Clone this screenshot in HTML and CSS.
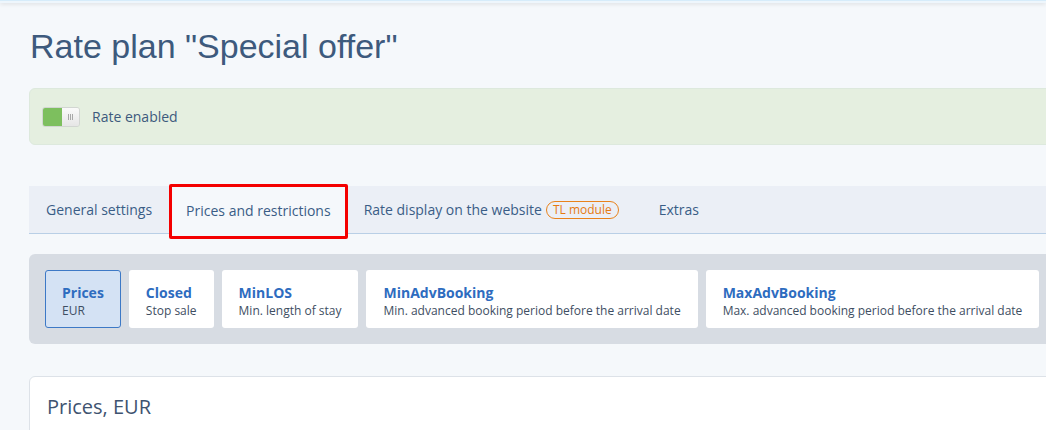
FILE: index.html
```html
<!doctype html>
<html lang="en">
 <head>
  <meta charset="UTF-8">
  <title>Rate plan</title>
  <link rel="stylesheet" href="styles.css">
 </head>
 <body>
  <div class="topbar"></div>

  <div class="page">
   <h1 class="title">Rate plan "Special offer"</h1>

   <!-- rate on/off -->
   <div class="status">
    <span class="toggle">
     <span class="toggle-on"></span>
     <span class="toggle-knob"><i></i><i></i><i></i></span>
    </span>
    <span class="status-text">Rate enabled</span>
   </div>

   <div class="tabs">
    <div class="tab">General settings</div>
    <div class="tab tab-active">Prices and restrictions</div>
    <div class="tab tab-wide">Rate display on the website <span class="badge">TL module</span></div>
    <div class="tab">Extras</div>
   </div>

   <div class="filters">
    <div class="card card-active">
     <div class="card-title">Prices</div>
     <div class="card-sub">EUR</div>
    </div>
    <div class="card">
     <div class="card-title">Closed</div>
     <div class="card-sub">Stop sale</div>
    </div>
    <div class="card">
     <div class="card-title">MinLOS</div>
     <div class="card-sub">Min. length of stay</div>
    </div>
    <div class="card">
     <div class="card-title">MinAdvBooking</div>
     <div class="card-sub">Min. advanced booking period before the arrival date</div>
    </div>
    <div class="card">
     <div class="card-title">MaxAdvBooking</div>
     <div class="card-sub">Max. advanced booking period before the arrival date</div>
    </div>
   </div>

   <div class="panel">
    <h2 class="panel-title">Prices, EUR</h2>
   </div>
  </div>
 </body>
</html>
```

FILE: styles.css
```css
/* reset */
*{margin:0;padding:0;box-sizing:border-box}

body{
	background:#f5f8fb;
	font-family:"Open Sans","Noto Sans",sans-serif;
	color:#3c5a7e;
	overflow:hidden;
}

.topbar{
	height:3px;
	background:#eef6fc;
	border-top:1px solid #d6ecfa;
	box-shadow:0 1px 4px rgba(0,0,0,0.12);
}

.page{
	width:1100px;
	padding-left:29px;
}

.title{
	font-family:"Liberation Sans",Arial,sans-serif;
	font-weight:normal;
	font-size:34px;
	color:#3d5a7d;
	line-height:40px;
	margin-top:23px;
	margin-left:1px;
}

/* green status box */
.status{
	margin-top:22px;
	height:57px;
	background:#e5efe0;
	border:1px solid #dde9dd;
	border-radius:6px;
	display:flex;
	align-items:center;
	padding-left:12px;
}
.toggle{
	display:flex;
	width:38px;
	height:20px;
	border-radius:3px;
	overflow:hidden;
	border:1px solid #d2d6d2;
}
.toggle-on{
	width:19px;
	background:#7dbf5e;
}
.toggle-knob{
	flex:1;
	background:linear-gradient(#fafafa,#e6e6e6);
	display:flex;
	justify-content:center;
	align-items:center;
	gap:1px;
}
.toggle-knob i{
	width:1px;
	height:6px;
	background:#a8a8a8;
}
.status-text{
	margin-left:12px;
	font-size:14px;
	color:#3d5a7d;
}

/* tabs */
.tabs{
	margin-top:41px;
	height:48px;
	background:#ebeff6;
	border-bottom:1px solid #b9cfe6;
	display:flex;
}
.tab{
	position:relative;
	display:flex;
	align-items:center;
	padding:0 17px;
	font-size:14px;
	color:#3a5d86;
	white-space:nowrap;
}
.tab-active{
	background:#f5f8fb;
	padding:0 16px;
	margin-left:1px;
	height:48px;
}
/* red highlight frame */
.tab-active::after{
	content:"";
	position:absolute;
	left:-1px;right:-1px;
	top:-2px;bottom:-5px;
	border:3px solid #f40000;
	border-radius:2px;
}
.tab-wide{
	padding-right:23px;
}
.badge{
	margin-left:4px;
	font-size:12px;
	line-height:16px;
	padding:0 6px;
	color:#e67a12;
	border:1px solid #e8821c;
	border-radius:9px;
}

/* filter cards */
.filters{
	margin-top:20px;
	background:#d7dce3;
	border-radius:6px;
	padding:16px;
	display:flex;
	gap:8px;
}
.card{
	height:58px;
	background:#fff;
	border-radius:3px;
	padding:13px 17px 0 17px;
	white-space:nowrap;
}
.card-active{
	background:#d4e2f4;
	border:1px solid #3d79c6;
	padding:12px 16px 0 16px;
}
.card-title{
	font-size:14px;
	font-weight:bold;
	color:#2e6cbf;
	line-height:19px;
}
.card-sub{
	font-size:12px;
	color:#3e4e62;
	line-height:18px;
}

.panel{
	margin-top:32px;
	height:80px;
	background:#fff;
	border:1px solid #dde2e8;
	border-radius:6px 0 0 0;
	padding:16px 17px;
}
.panel-title{
	font-weight:normal;
	font-size:20px;
	color:#3e5370;
}
```
